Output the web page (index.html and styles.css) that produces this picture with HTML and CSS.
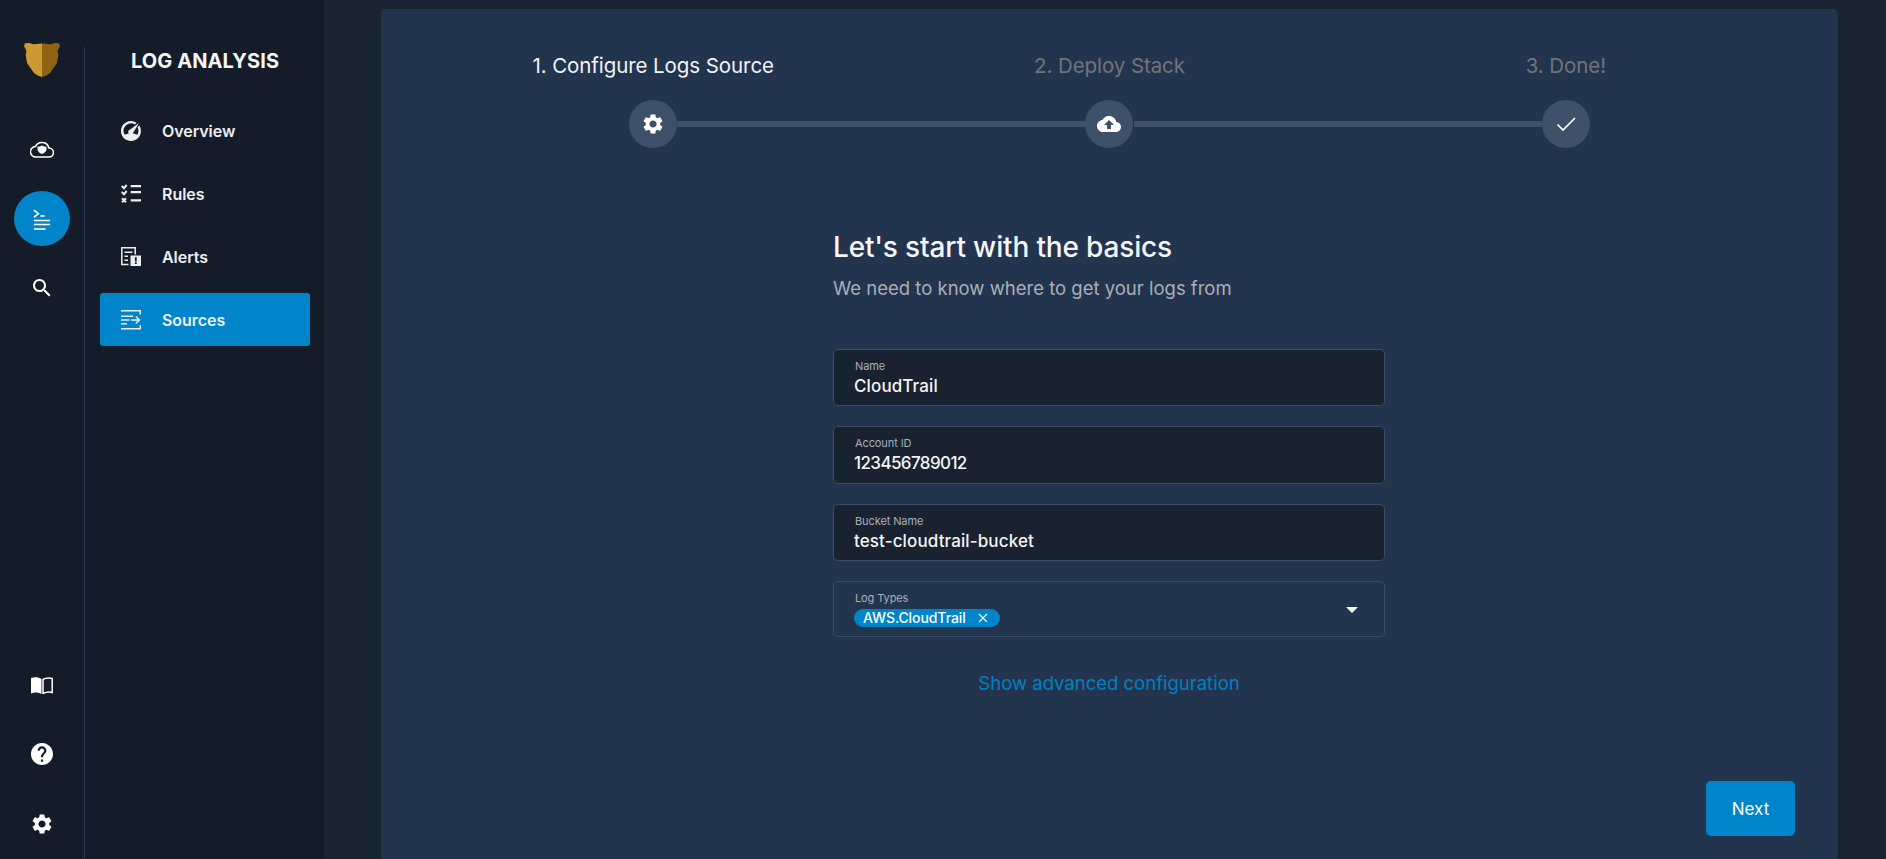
FILE: index.html
```html
<!DOCTYPE html>
<html lang="en">
<head>
<meta charset="utf-8">
<title>Log Analysis</title>
<link rel="stylesheet" href="styles.css">
</head>
<body>
<div class="app">
  <aside class="rail">
    <svg class="logo" viewBox="0 0 36 34"><path class="logo-l" d="M18 .6 9.300 1.200 5.300 0 1 .3 0 3l2.500 5-.8 4 1.300 8 7 10 3.700 2.500 4.300 1.500z"/><path class="logo-r" d="M18 .6l8.700.6 4-1.200L35 .3 36 3l-2.500 5 .8 4-1.300 8-7 10-3.700 2.500L18 34z"/></svg>
    <div class="rail-top">
      <span class="rail-btn"><svg class="ic24" viewBox="0 0 24 24"><path class="stroke-thin" d="M19 20H6a5.200 5.200 0 0 1-.6-10.400 7.200 7.200 0 0 1 13.500 1.400 4.500 4.500 0 0 1 .1 9z"/><path d="M12 8.500c1.500.8 3 1.200 4.500 1.200v2.300c0 2.500-2 4-4.500 5-2.500-1-4.500-2.500-4.500-5V9.700c1.500 0 3-.4 4.500-1.200z"/></svg></span>
      <span class="rail-btn is-active"><svg class="ic-log" viewBox="0 0 20 24"><path class="stroke" d="M1 1l5 4-5 4M8 7.600h5M1 12.500h18M1 17h18M1 22h13"/></svg></span>
      <span class="rail-btn"><svg class="ic24" viewBox="0 0 24 24"><path d="M15.5 14h-.79l-.28-.27C15.41 12.59 16 11.11 16 9.5 16 5.91 13.09 3 9.5 3S3 5.91 3 9.5 5.91 16 9.5 16c1.61 0 3.09-.59 4.23-1.57l.27.28v.79l5 4.99L20.49 19l-4.99-5zm-6 0C7.01 14 5 11.99 5 9.5S7.01 5 9.5 5 14 7.01 14 9.5 11.99 14 9.5 14z"/></svg></span>
    </div>
    <div class="rail-bottom">
      <span class="rail-btn"><svg class="ic-book" viewBox="0 0 22 17"><path d="M0 1C3.500 0 7.500 0 10.500 2v15C7.500 15.300 3.500 15 0 16.500z"/><path class="stroke-thin" d="M12 2.500C14.500 1 18 .8 21.200 1.500v14c-3.200-.7-6.700-.4-9.200 1.200z"/></svg></span>
      <span class="rail-btn"><svg class="ic-help" viewBox="2 2 20 20"><path d="M12 2C6.480 2 2 6.480 2 12s4.480 10 10 10 10-4.480 10-10S17.520 2 12 2zm1 17h-2v-2h2v2zm2.070-7.750l-.9.920C13.450 12.900 13 13.500 13 15h-2v-.5c0-1.100.45-2.100 1.170-2.830l1.240-1.260c.37-.36.59-.86.59-1.410 0-1.100-.9-2-2-2s-2 .9-2 2H8c0-2.210 1.790-4 4-4s4 1.790 4 4c0 .88-.36 1.680-.93 2.250z"/></svg></span>
      <span class="rail-btn"><svg class="ic24" viewBox="0 0 24 24"><path d="M19.14 12.940c.04-.3.06-.61.06-.94 0-.32-.02-.64-.07-.94l2.030-1.580c.18-.14.23-.41.12-.61l-1.920-3.320c-.12-.22-.37-.29-.59-.22l-2.390.96c-.5-.38-1.030-.7-1.620-.94l-.36-2.540c-.04-.24-.24-.41-.48-.41h-3.840c-.24 0-.43.17-.47.41l-.36 2.540c-.59.24-1.130.57-1.620.94l-2.390-.96c-.22-.08-.47 0-.59.22L2.740 8.870c-.12.21-.08.47.12.61l2.030 1.580c-.05.3-.09.63-.09.94s.02.64.07.94l-2.030 1.580c-.18.14-.23.41-.12.61l1.920 3.320c.12.22.37.29.59.22l2.390-.96c.5.38 1.030.7 1.620.94l.36 2.540c.05.24.24.41.48.41h3.840c.24 0 .44-.17.47-.41l.36-2.540c.59-.24 1.130-.56 1.620-.94l2.390.96c.22.08.47 0 .59-.22l1.920-3.320c.12-.22.07-.47-.12-.61l-2.010-1.580zM12 15.600c-1.980 0-3.600-1.620-3.600-3.600s1.620-3.600 3.600-3.600 3.600 1.620 3.600 3.600-1.620 3.600-3.600 3.600z"/></svg></span>
    </div>
  </aside>

  <nav class="nav">
    <h1 class="nav-title">LOG ANALYSIS</h1>
    <ul class="nav-list">
      <li class="nav-item"><svg class="nav-ic" viewBox="0 0 20 20"><path d="M10 0a10 10 0 0 1 5.500 1.650l-1.500 1.800A7.500 7.500 0 1 0 17.500 10a7.500 7.500 0 0 0-1-3.700l1.800-1.800A10 10 0 1 1 10 0z"/><path d="M18 2 12.200 11.700a2.600 2.600 0 1 1-3-3.300z"/><path d="M3 14Q10 10.500 17 14A8 8 0 0 1 3 14z"/></svg>Overview</li>
      <li class="nav-item"><svg class="nav-ic" viewBox="0 0 20 20"><path d="M9.700 1H20v2.300H9.700zM9.700 7H20v2.300H9.700zM9.700 15.300H20v2.300H9.700z"/><path class="stroke-bold" d="M.7 2 3 4.300 5.700 1M.7 8 3 10.300 5.700 7M1 14.200l4 4M5 14.200l-4 4"/></svg>Rules</li>
      <li class="nav-item"><svg class="nav-ic" viewBox="0 0 20 20"><path class="stroke-thin" d="M7.500 17.500H.8V.8h13.400v6.700"/><path d="M3.500 4.500h8v1.600h-8zM3.500 8.500h3.500v1.600H3.500zM3.500 12.500h3.500v1.600H3.500z"/><path fill-rule="evenodd" d="M9.500 8.500H20V19H9.500zM13.900 10.300v4.200h1.800v-4.200zM13.900 15.200V17h1.800v-1.800z"/></svg>Alerts</li>
      <li class="nav-item is-active"><svg class="nav-ic" viewBox="0 0 20 20"><path d="M0 0h20v4.500h-1.500V1.500H0zM0 18h18.500v-3H20v4.500H0zM0 5.500h12v1.500H0zM0 9.300h8.500v1.500H0zM0 13h6v1.500H0z"/><path d="M10 9.300h6.500l-2.200-2.200 1-1L19.500 10l-4.200 4-1-1 2.200-2.200H10z"/></svg>Sources</li>
    </ul>
  </nav>

  <main class="main">
    <section class="card">
      <div class="steps-labels">
        <span class="step-label is-current">1. Configure Logs Source</span>
        <span class="step-label">2. Deploy Stack</span>
        <span class="step-label">3. Done!</span>
      </div>
      <div class="steps-track">
        <span class="step-dot"><svg class="ic24" viewBox="0 0 24 24"><path d="M19.14 12.940c.04-.3.06-.61.06-.94 0-.32-.02-.64-.07-.94l2.030-1.580c.18-.14.23-.41.12-.61l-1.920-3.320c-.12-.22-.37-.29-.59-.22l-2.390.96c-.5-.38-1.030-.7-1.620-.94l-.36-2.540c-.04-.24-.24-.41-.48-.41h-3.840c-.24 0-.43.17-.47.41l-.36 2.540c-.59.24-1.130.57-1.620.94l-2.390-.96c-.22-.08-.47 0-.59.22L2.740 8.870c-.12.21-.08.47.12.61l2.030 1.580c-.05.3-.09.63-.09.94s.02.64.07.94l-2.030 1.580c-.18.14-.23.41-.12.61l1.920 3.320c.12.22.37.29.59.22l2.390-.96c.5.38 1.030.7 1.620.94l.36 2.540c.05.24.24.41.48.41h3.840c.24 0 .44-.17.47-.41l.36-2.540c.59-.24 1.130-.56 1.620-.94l2.390.96c.22.08.47 0 .59-.22l1.920-3.320c.12-.22.07-.47-.12-.61l-2.010-1.580zM12 15.600c-1.980 0-3.600-1.620-3.600-3.600s1.620-3.600 3.600-3.600 3.600 1.620 3.600 3.600-1.620 3.600-3.600 3.600z"/></svg></span>
        <span class="step-line"></span>
        <span class="step-dot step-dot-mid"><svg class="ic24" viewBox="0 0 24 24"><path d="M19.350 10.040C18.670 6.590 15.640 4 12 4 9.110 4 6.600 5.640 5.350 8.040 2.340 8.360 0 10.910 0 14c0 3.310 2.690 6 6 6h13c2.760 0 5-2.240 5-5 0-2.640-2.050-4.780-4.650-4.960zM14 13v4h-4v-4H7l5-5 5 5h-3z"/></svg></span>
        <span class="step-line"></span>
        <span class="step-dot"><svg class="ic24" viewBox="0 0 24 24"><path class="stroke-check" d="M3.500 12.500 9 18 21 6"/></svg></span>
      </div>

      <form class="form">
        <h2 class="form-title">Let's start with the basics</h2>
        <p class="form-sub">We need to know where to get your logs from</p>
        <div class="fields">
          <div class="field"><span class="field-label">Name</span><span class="field-value">CloudTrail</span></div>
          <div class="field"><span class="field-label">Account ID</span><span class="field-value is-num">123456789012</span></div>
          <div class="field"><span class="field-label">Bucket Name</span><span class="field-value">test-cloudtrail-bucket</span></div>
          <div class="field field-select">
            <div class="select-body">
              <span class="field-label">Log Types</span>
              <span class="tag">AWS.CloudTrail<svg class="tag-x" viewBox="0 0 10 10"><path class="stroke-x" d="M1 1l8 8M9 1l-8 8"/></svg></span>
            </div>
            <svg class="caret" viewBox="0 0 12 6"><path d="M0 0h12L6 6z"/></svg>
          </div>
        </div>
        <a class="adv-link">Show advanced configuration</a>
      </form>

      <button type="button" class="next-btn">Next</button>
    </section>
  </main>
</div>
</body>
</html>
```

FILE: styles.css
```css
* { box-sizing: border-box; }
html, body { margin: 0; height: 100%; }
body {
  background: #1b2431;
  color: #fff;
  font-family: Inter, "Noto Sans", sans-serif;
  overflow: hidden;
}
svg { display: block; fill: currentColor; flex: none; }
.stroke { fill: none; stroke: currentColor; stroke-width: 1.8; }
.stroke-thin { fill: none; stroke: currentColor; stroke-width: 1.5; }
.stroke-bold { fill: none; stroke: currentColor; stroke-width: 2; }
.stroke-x { fill: none; stroke: currentColor; stroke-width: 1.1; }
.stroke-check { fill: none; stroke: currentColor; stroke-width: 1.7; }
.ic24 { width: 24px; height: 24px; }

.app { display: flex; height: 859px; }

.rail {
  width: 85px;
  flex: none;
  background: #151c29;
  display: flex;
  flex-direction: column;
  align-items: center;
  position: relative;
  padding-top: 43px;
}
.rail::after {
  content: "";
  position: absolute;
  right: 0;
  top: 47px;
  bottom: 0;
  width: 1px;
  background: #233a57;
}
.logo { width: 36px; height: 34px; margin-right: 1px; }
.logo-l { fill: #cb9a30; }
.logo-r { fill: #8e6414; }
.rail-top { display: flex; flex-direction: column; align-items: center; margin-top: 44px; margin-right: 1px; gap: 14px; }
.rail-btn { width: 56px; height: 55px; display: flex; align-items: center; justify-content: center; border-radius: 50%; }
.rail-btn.is-active { background: #0085ca; margin-top: 1px; }
.ic-log { width: 18px; height: 22px; margin-top: 2px; }
.ic-book { width: 22px; height: 17px; }
.ic-help { width: 22px; height: 22px; }
.rail-bottom { margin-top: auto; margin-bottom: 7px; display: flex; flex-direction: column; align-items: center; margin-right: 1px; gap: 14px; }
.rail-bottom .rail-btn:first-child { margin-bottom: -1px; }
.rail-bottom .rail-btn:last-child { margin-top: 1px; margin-bottom: 1px; }

.nav {
  width: 239px;
  flex: none;
  background: #151c29;
  padding: 51px 14px 0 15px;
}
.nav-title {
  margin: 0 0 33px;
  font-size: 20px;
  line-height: 20px;
  font-weight: 700;
  letter-spacing: 0.1px;
  text-align: center;
  color: #f4f5f6;
}
.nav-list { list-style: none; margin: 0; padding: 0; display: flex; flex-direction: column; gap: 10px; }
.nav-item {
  height: 53px;
  display: flex;
  align-items: center;
  gap: 21px;
  padding-left: 21px;
  border-radius: 3px;
  font-size: 16px;
  font-weight: 600;
  letter-spacing: -0.05px;
  color: #eceef0;
}
.nav-item.is-active { background: #0085ca; }
.nav-ic { width: 20px; height: 20px; }

.main { flex: 1; padding: 9px 48px 0 57px; min-width: 0; }
.card {
  height: 100%;
  background: #23344e;
  border-radius: 5px 5px 0 0;
  display: flex;
  flex-direction: column;
  padding: 45px 44px 23px;
}
.steps-labels { display: grid; grid-template-columns: repeat(3, 1fr); height: 24px; line-height: 24px; }
.step-label {
  text-align: center;
  font-size: 20.500px;
  color: #70747b;
  letter-spacing: -0.08px;
}
.step-label.is-current { color: #f1f3f5; }
.steps-track {
  margin-top: 22px;
  padding: 0 204px;
  display: flex;
  align-items: center;
}
.step-dot {
  width: 48px;
  height: 48px;
  border-radius: 50%;
  background: #3f506a;
  display: flex;
  align-items: center;
  justify-content: center;
  flex: none;
}
.step-dot-mid { margin: 0 0.5px 0 -0.5px; }
.step-line { flex: 1; height: 6px; background: #3f506a; }

.form { width: 552px; align-self: center; margin: 80px 1px 0 0; display: flex; flex-direction: column; }
.form-title { margin: 0; font-size: 28px; line-height: 38px; font-weight: 500; letter-spacing: -0.16px; color: #f5f6f7; }
.form-sub { margin: 10px 0 0; font-size: 18.500px; line-height: 24px; color: #a9afb9; }
.fields { margin-top: 49px; display: flex; flex-direction: column; gap: 20px; }
.field {
  height: 57.330px;
  border: 1px solid #3a4c68;
  border-radius: 5px;
  background: #19222f;
  padding: 9px 19px 0 20px;
  display: flex;
  flex-direction: column;
}
.field-label { font-size: 11px; line-height: 14px; color: #a9afb9; padding-left: 1px; letter-spacing: -0.1px; }
.field-value { margin-top: 3px; font-size: 17px; line-height: 20px; font-weight: 500; letter-spacing: 0.12px; color: #f3f4f6; }
.field-value.is-num { letter-spacing: -0.6px; }
.field-select {
  height: 56px;
  background: transparent;
  flex-direction: row;
  align-items: flex-start;
  justify-content: space-between;
  padding-right: 26px;
}
.select-body { display: flex; flex-direction: column; align-items: flex-start; }
.tag {
  margin-top: 4px;
  height: 18px;
  padding: 0 12px 0 9px;
  border-radius: 9px;
  background: #0085ca;
  display: flex;
  align-items: center;
  gap: 12px;
  font-size: 14px;
  font-weight: 500;
  letter-spacing: -0.08px;
  white-space: nowrap;
}
.tag-x { width: 10px; height: 10px; }
.caret { width: 12px; height: 6px; margin-top: 16px; color: #f3f4f6; }
.adv-link { margin-top: 34px; text-align: center; font-size: 18.500px; line-height: 24px; color: #0080c4; }

.next-btn {
  margin: auto -1px 0 0;
  align-self: flex-end;
  width: 89px;
  height: 55px;
  border: 0;
  border-radius: 5px;
  background: #0085ca;
  color: #fff;
  font-family: Inter, sans-serif;
  font-size: 17px;
  font-weight: 400;
}
```
